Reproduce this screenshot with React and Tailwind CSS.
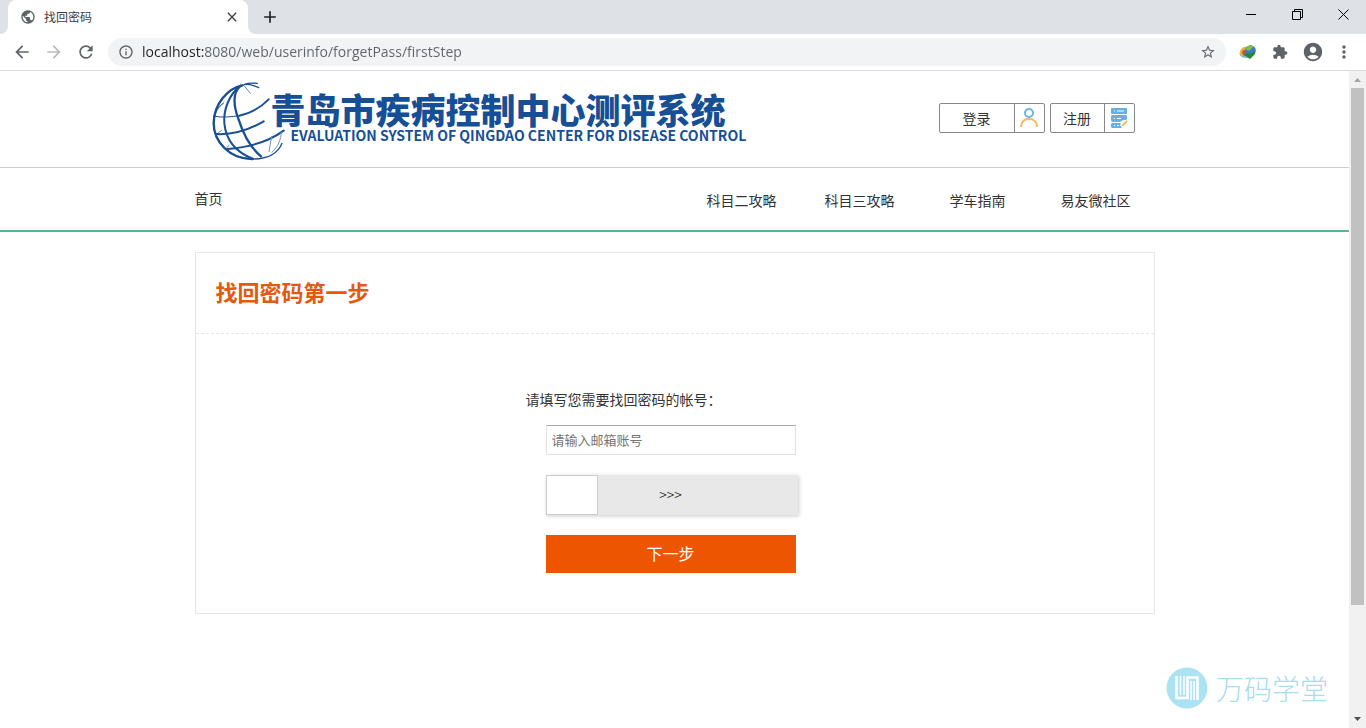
import React, { useState } from 'react';
import {
  MdAccountCircle,
  MdAdd,
  MdArrowBack,
  MdArrowForward,
  MdClose,
  MdExtension,
  MdInfoOutline,
  MdMoreVert,
  MdPublic,
  MdRefresh,
  MdStarBorder,
} from 'react-icons/md';

const navLinks = ['科目二攻略', '科目三攻略', '学车指南', '易友微社区'];

function BrowserBar() {
  const [url, setUrl] = useState('localhost:8080/web/userinfo/forgetPass/firstStep');

  return (
    <div>
      <div className="flex h-[34px] justify-between bg-[#dee1e6]">
        <div className="flex">
          <span className="size-2 self-end bg-white">
            <span className="block size-full rounded-br-lg bg-[#dee1e6]" />
          </span>
          <div className="flex w-60 items-center rounded-t-lg bg-white pl-3 pr-2">
            <MdPublic className="size-4 text-[#5f6368]" />
            <span className="ml-2 flex-1 text-xs text-[#3c4043]">找回密码</span>
            <button aria-label="关闭标签页" className="text-[#3c4043]">
              <MdClose className="size-4" />
            </button>
          </div>
          <span className="size-2 self-end bg-white">
            <span className="block size-full rounded-bl-lg bg-[#dee1e6]" />
          </span>
          <button aria-label="新标签页" className="ml-1 text-[#202124]">
            <MdAdd className="size-5" />
          </button>
        </div>
        <div className="flex h-7">
          <button aria-label="最小化" className="flex w-[46px] items-center justify-center">
            <svg className="size-[11px]" viewBox="0 0 11 11" stroke="#000" fill="none">
              <path d="M0 5.5H10" />
            </svg>
          </button>
          <button aria-label="还原" className="flex w-[46px] items-center justify-center">
            <svg className="size-[11px]" viewBox="0 0 11 11" stroke="#000" fill="none">
              <path d="M.5 2.5H8.500V10.500H.5ZM2.500 2.500V.5H10.500V8.500H8.500" />
            </svg>
          </button>
          <button aria-label="关闭" className="flex w-[46px] items-center justify-center">
            <svg className="size-[11px]" viewBox="0 0 11 11" stroke="#000" fill="none">
              <path d="M.5 .5L10.500 10.500M10.500 .5L.5 10.500" />
            </svg>
          </button>
        </div>
      </div>

      <div className="flex h-[37px] items-center border-b border-[#d9dbde] bg-white pl-3 pr-3 text-[#5f6368]">
        <div className="flex gap-3">
          <button aria-label="后退">
            <MdArrowBack className="size-5" />
          </button>
          <button aria-label="前进" className="text-[#b8babd]">
            <MdArrowForward className="size-5" />
          </button>
          <button aria-label="重新加载">
            <MdRefresh className="size-5" />
          </button>
        </div>
        <div className="ml-3 flex h-7 flex-1 items-center rounded-full bg-[#f1f3f4] px-2.5">
          <MdInfoOutline className="size-4 shrink-0" />
          {/* host part of the address is darker than the path */}
          <input
            aria-label="地址"
            value={url}
            onChange={(e) => setUrl(e.target.value)}
            className="ml-2 min-w-0 flex-1 bg-[linear-gradient(to_right,#202124_61px,#5f6368_61px)] bg-clip-text font-['Open_Sans',sans-serif] text-sm text-transparent caret-black outline-none"
          />
          <button aria-label="为此标签页添加书签">
            <MdStarBorder className="size-4" />
          </button>
        </div>
        <div className="ml-3 flex items-center gap-3">
          <button aria-label="下载扩展">
            <svg className="size-5" viewBox="0 0 20 20">
              <ellipse cx="8" cy="11.500" rx="6.500" ry="4.500" fill="#86b9d8" />
              <path d="M2 11C2 6 6 4 9 5L10 9L5 14C3 14 2 13 2 11Z" fill="#dfb24b" />
              <path d="M4 11C5 7 8 7 9 10L6 14Z" fill="#c5532e" />
              <circle cx="12.500" cy="8.500" r="5.300" fill="#3a78cf" />
              <path d="M8 7C9 3 14 2 16 5C14 5 14 7 12 8C11 9 9 9 8 7Z" fill="#7ec33c" />
              <path d="M8 11L12 12L17 9L17 12L12 17L6 13Z" fill="#258a2b" />
            </svg>
          </button>
          <button aria-label="扩展程序">
            <MdExtension className="size-5 p-0.5" />
          </button>
          <button aria-label="用户">
            <MdAccountCircle className="size-[22px]" />
          </button>
          <button aria-label="菜单" className="-ml-0.5">
            <MdMoreVert className="size-5" />
          </button>
        </div>
      </div>
    </div>
  );
}

function GlobeLogo() {
  return (
    <svg className="h-20 w-[74px]" viewBox="36 24 222 240" fill="none" stroke="#1a4f93" strokeLinecap="round">
      <path d="M176 44C153 33 139 31 127 37C84 46 42 91 41 150C41 205 88 259 158 258C204 258 235 240 246 211" strokeWidth="4" />
      <path d="M127 37C84 46 42 91 41 150C41 205 88 259 158 258" strokeWidth="7" />
      <path d="M122 38C86 65 70 112 73 151C78 202 110 238 158 257" strokeWidth="6" />
      <path d="M121 39C95 62 102 103 116 140C130 184 150 223 183 250" strokeWidth="7" />
      <path d="M134 34C146 29 160 30 172 31" strokeWidth="4" />
      <path d="M118 128C154 120 183 103 206 79" strokeWidth="6" />
      <path d="M43 130C65 134 93 132 118 128" strokeWidth="3" />
      <path d="M49 183C96 186 145 172 191 145" strokeWidth="6" />
      <path d="M83 228C145 223 205 207 251 173" strokeWidth="6" />
      <path d="M72 88C59 99 50 111 43 130M70 92C62 96 57 102 52 109M65 172L50 184M87 216L76 231M134 40L151 61" strokeWidth="2" />
      <path d="M215 190L207 236M244 178C243 200 234 221 216 238" stroke="#7894bb" strokeWidth="3" />
    </svg>
  );
}

function Header() {
  return (
    <header className="border-b border-[#ccc]">
      <div className="mx-auto flex h-24 max-w-[960px] items-center justify-between pr-5">
        <a href="#" className="flex items-center pl-[17px] pt-1 text-[#164f96]">
          <GlobeLogo />
          <span className="-ml-[15px] flex flex-col pb-2">
            <span className="whitespace-nowrap text-[35px] font-black leading-9">青岛市疾病控制中心测评系统</span>
            <span className="ml-5 whitespace-nowrap text-sm font-bold leading-4">
              EVALUATION SYSTEM OF QINGDAO CENTER FOR DISEASE CONTROL
            </span>
          </span>
        </a>
        <div className="flex gap-[5px] pb-0.5">
          <a href="#" className="flex h-[30px] items-center rounded-xs border border-[#888]">
            <span className="w-[74px] text-center">登录</span>
            <span className="flex h-full w-[30px] items-center justify-center border-l border-[#888]">
              <svg className="size-5" viewBox="0 0 20 20" fill="none" strokeWidth="2">
                <circle cx="10" cy="5" r="4" stroke="#68b5e4" />
                <path d="M2 19C2 8 18 8 18 19" stroke="#f6ba62" />
              </svg>
            </span>
          </a>
          <a href="#" className="flex h-[30px] items-center rounded-xs border border-[#888]">
            <span className="w-[53px] text-center">注册</span>
            <span className="flex h-full w-[30px] items-center justify-center border-l border-[#888]">
              <svg className="size-5" viewBox="0 0 20 20">
                <g fill="#68b0df">
                  <rect x="2" y="0" width="16" height="6" rx="1" />
                  <path d="M3 7H17L18 8V11L17 12H14L11 14H3L2 12V8Z" />
                  <path d="M3 15H12L11 17L13 20H3L2 19V16Z" />
                </g>
                <path d="M5 3H6M8 3H15M5 10.500H6M8 10.500H12M5 17.500H6M8 17.500H10" stroke="#fff" />
                <path d="M13 18L18 13" stroke="#f6ba62" strokeWidth="2" />
              </svg>
            </span>
          </a>
        </div>
      </div>
    </header>
  );
}

function Nav() {
  return (
    <nav className="border-b-2 border-[#53b798]">
      <div className="mx-auto flex h-[62px] max-w-[960px] items-center justify-between pb-0.5">
        <a href="#">首页</a>
        <div className="flex pt-1">
          {navLinks.map((link) => (
            <a key={link} href="#" className="w-[118px] text-center">
              {link}
            </a>
          ))}
        </div>
      </div>
    </nav>
  );
}

function ForgetPass() {
  const [account, setAccount] = useState('');
  const [slide, setSlide] = useState(0);

  return (
    <section className="mx-auto mt-5 max-w-[960px] border border-[#e6e6e6]">
      <h1 className="border-b border-dashed border-[#e6e6e6] px-5 pb-[26px] pt-[22px] text-[22px] font-bold leading-8 text-[#e2590f]">
        找回密码第一步
      </h1>
      <form className="mx-auto w-[298px] pb-10 pt-[55px]" onSubmit={(e) => e.preventDefault()}>
        <label htmlFor="account" className="block leading-5">
          请填写您需要找回密码的帐号：
        </label>
        <div className="ml-5 mt-4 flex w-[250px] flex-col gap-5">
          <input
            id="account"
            value={account}
            onChange={(e) => setAccount(e.target.value)}
            placeholder="请输入邮箱账号"
            className="h-[30px] border border-[#e2e2e2] border-t-[#aaa] px-[5px] pb-0.5 text-[13px] outline-none placeholder:text-[#757575]"
          />
          <div className="grid h-10 w-[252px] bg-[#e8e8e8] shadow-[1px_1px_4px_#ccc]">
            <span className="pointer-events-none col-start-1 row-start-1 self-center pb-0.5 pr-0.5 text-center font-light text-black">
              &gt;&gt;&gt;
            </span>
            <input
              type="range"
              aria-label="滑动验证"
              min="0"
              max="100"
              value={slide}
              onChange={(e) => setSlide(Number(e.target.value))}
              className="col-start-1 row-start-1 h-10 w-full appearance-none bg-transparent [&::-webkit-slider-thumb]:h-10 [&::-webkit-slider-thumb]:w-[52px] [&::-webkit-slider-thumb]:appearance-none [&::-webkit-slider-thumb]:border [&::-webkit-slider-thumb]:border-[#ccc] [&::-webkit-slider-thumb]:bg-white"
            />
          </div>
          <button className="h-[38px] bg-[#ed5500] pb-0.5 text-base text-white">下一步</button>
        </div>
      </form>
    </section>
  );
}

function Scrollbar() {
  return (
    <div className="flex w-[17px] shrink-0 flex-col items-center bg-[#f1f1f1]">
      <svg className="size-[17px]" viewBox="0 0 17 17">
        <path d="M5 11L8.500 7L12 11Z" fill="#a3a3a3" />
      </svg>
      <div className="flex w-[13px] flex-1 flex-col">
        <div className="h-[83%] bg-[#c1c1c1]" />
      </div>
      <svg className="size-[17px]" viewBox="0 0 17 17">
        <path d="M5 6L8.500 10L12 6Z" fill="#505050" />
      </svg>
    </div>
  );
}

function Watermark() {
  return (
    <div className="absolute bottom-[19px] right-[21px] flex items-center gap-2 text-[#a9dcec]">
      <svg className="size-[42px]" viewBox="0 0 42 42" fill="none">
        <circle cx="21" cy="21" r="20.500" fill="#ace3f2" />
        <path d="M10.500 9V31H21.500V10.500H31.500V33" stroke="#fff" strokeWidth="2.500" />
        <path d="M14.500 9V28M18 9V28M25 14V33M28 14V33" stroke="#fff" strokeWidth="1.500" />
      </svg>
      <span className="text-[28px] font-light leading-10">万码学堂</span>
    </div>
  );
}

function App() {
  return (
    <div className="flex min-h-screen flex-col bg-white font-['Noto_Sans_CJK_SC',sans-serif] text-sm text-[#333]">
      <BrowserBar />
      <div className="flex flex-1">
        <main className="relative min-w-0 flex-1">
          <Header />
          <Nav />
          <ForgetPass />
          <Watermark />
        </main>
        <Scrollbar />
      </div>
    </div>
  );
}

export default App;
